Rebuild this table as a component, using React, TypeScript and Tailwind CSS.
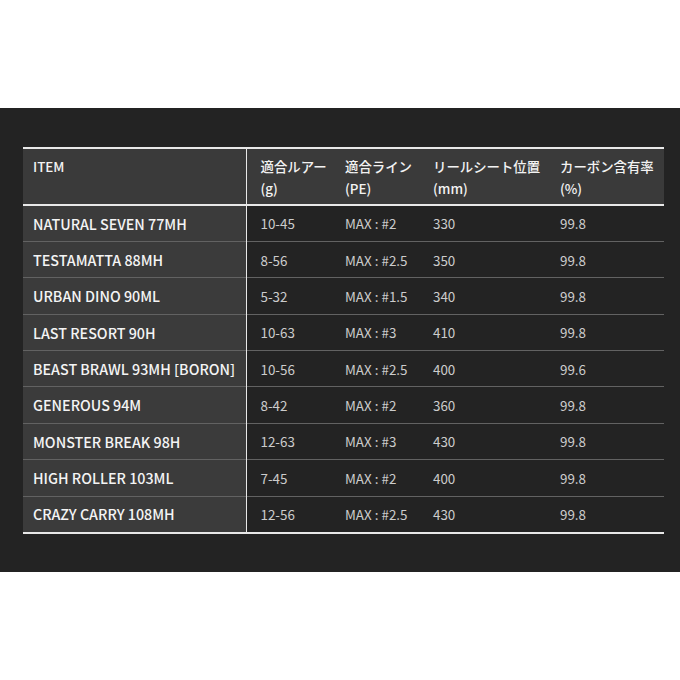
const rows = [
  ["NATURAL SEVEN 77MH", "10-45", "#2", "330", "99.8"],
  ["TESTAMATTA 88MH", "8-56", "#2.5", "350", "99.8"],
  ["URBAN DINO 90ML", "5-32", "#1.5", "340", "99.8"],
  ["LAST RESORT 90H", "10-63", "#3", "410", "99.8"],
  ["BEAST BRAWL 93MH [BORON]", "10-56", "#2.5", "400", "99.6"],
  ["GENEROUS 94M", "8-42", "#2", "360", "99.8"],
  ["MONSTER BREAK 98H", "12-63", "#3", "430", "99.8"],
  ["HIGH ROLLER 103ML", "7-45", "#2", "400", "99.8"],
  ["CRAZY CARRY 108MH", "12-56", "#2.5", "430", "99.8"],
];

const headers: [string, string][] = [
  ["適合ルアー", "(g)"],
  ["適合ライン", "(PE)"],
  ["リールシート位置", "(mm)"],
  ["カーボン含有率", "(%)"],
];

export default function App() {
  return (
    <div
      className="w-[680px] h-[680px] bg-white pt-[108px]"
      style={{ fontFamily: '"Noto Sans CJK JP", "Noto Sans", sans-serif' }}
    >
      <div className="h-[464px] bg-[#232323] pt-[39px] px-[23px]">
        <table className="w-[641px] table-fixed border-collapse text-[13.4px]">
          <colgroup>
            <col className="w-[223px]" />
            <col className="w-[85px]" />
            <col className="w-[88px]" />
            <col className="w-[127px]" />
            <col className="w-[118px]" />
          </colgroup>
          <thead>
            <tr className="bg-[#3a3a3a] border-t-2 border-b-2 border-[#e8e8e8] h-[57px]">
              <th className="align-top text-left font-medium text-[#f2f2f2] pl-[10px] pt-[6px] leading-[22px] border-r border-[#e8e8e8]">
                ITEM
              </th>
              {headers.map(([a, b]) => (
                <th
                  key={a}
                  className="align-top text-left font-medium text-[#f2f2f2] pl-[14px] pt-[6px] leading-[22px] whitespace-nowrap"
                >
                  {a}
                  <br />
                  {b}
                </th>
              ))}
            </tr>
          </thead>
          <tbody>
            {rows.map((r, i) => (
              <tr
                key={r[0]}
                className={`h-[36.4px] ${
                  i === rows.length - 1
                    ? "border-b-2 border-[#e8e8e8]"
                    : "border-b border-[#626262]"
                }`}
              >
                <td className="bg-[#3b3b3b] pl-[10px] font-medium text-[14.3px] text-[#f4f4f4] border-r border-[#e8e8e8] whitespace-nowrap">
                  {r[0]}
                </td>
                <td className="pl-[14px] text-[#cccccc] whitespace-nowrap">{r[1]}</td>
                <td className="pl-[14px] text-[#cccccc] whitespace-nowrap">
                  MAX<span className="px-[3px]">:</span>
                  {r[2]}
                </td>
                <td className="pl-[14px] text-[#cccccc] whitespace-nowrap">{r[3]}</td>
                <td className="pl-[14px] text-[#cccccc] whitespace-nowrap">{r[4]}</td>
              </tr>
            ))}
          </tbody>
        </table>
      </div>
    </div>
  );
}
